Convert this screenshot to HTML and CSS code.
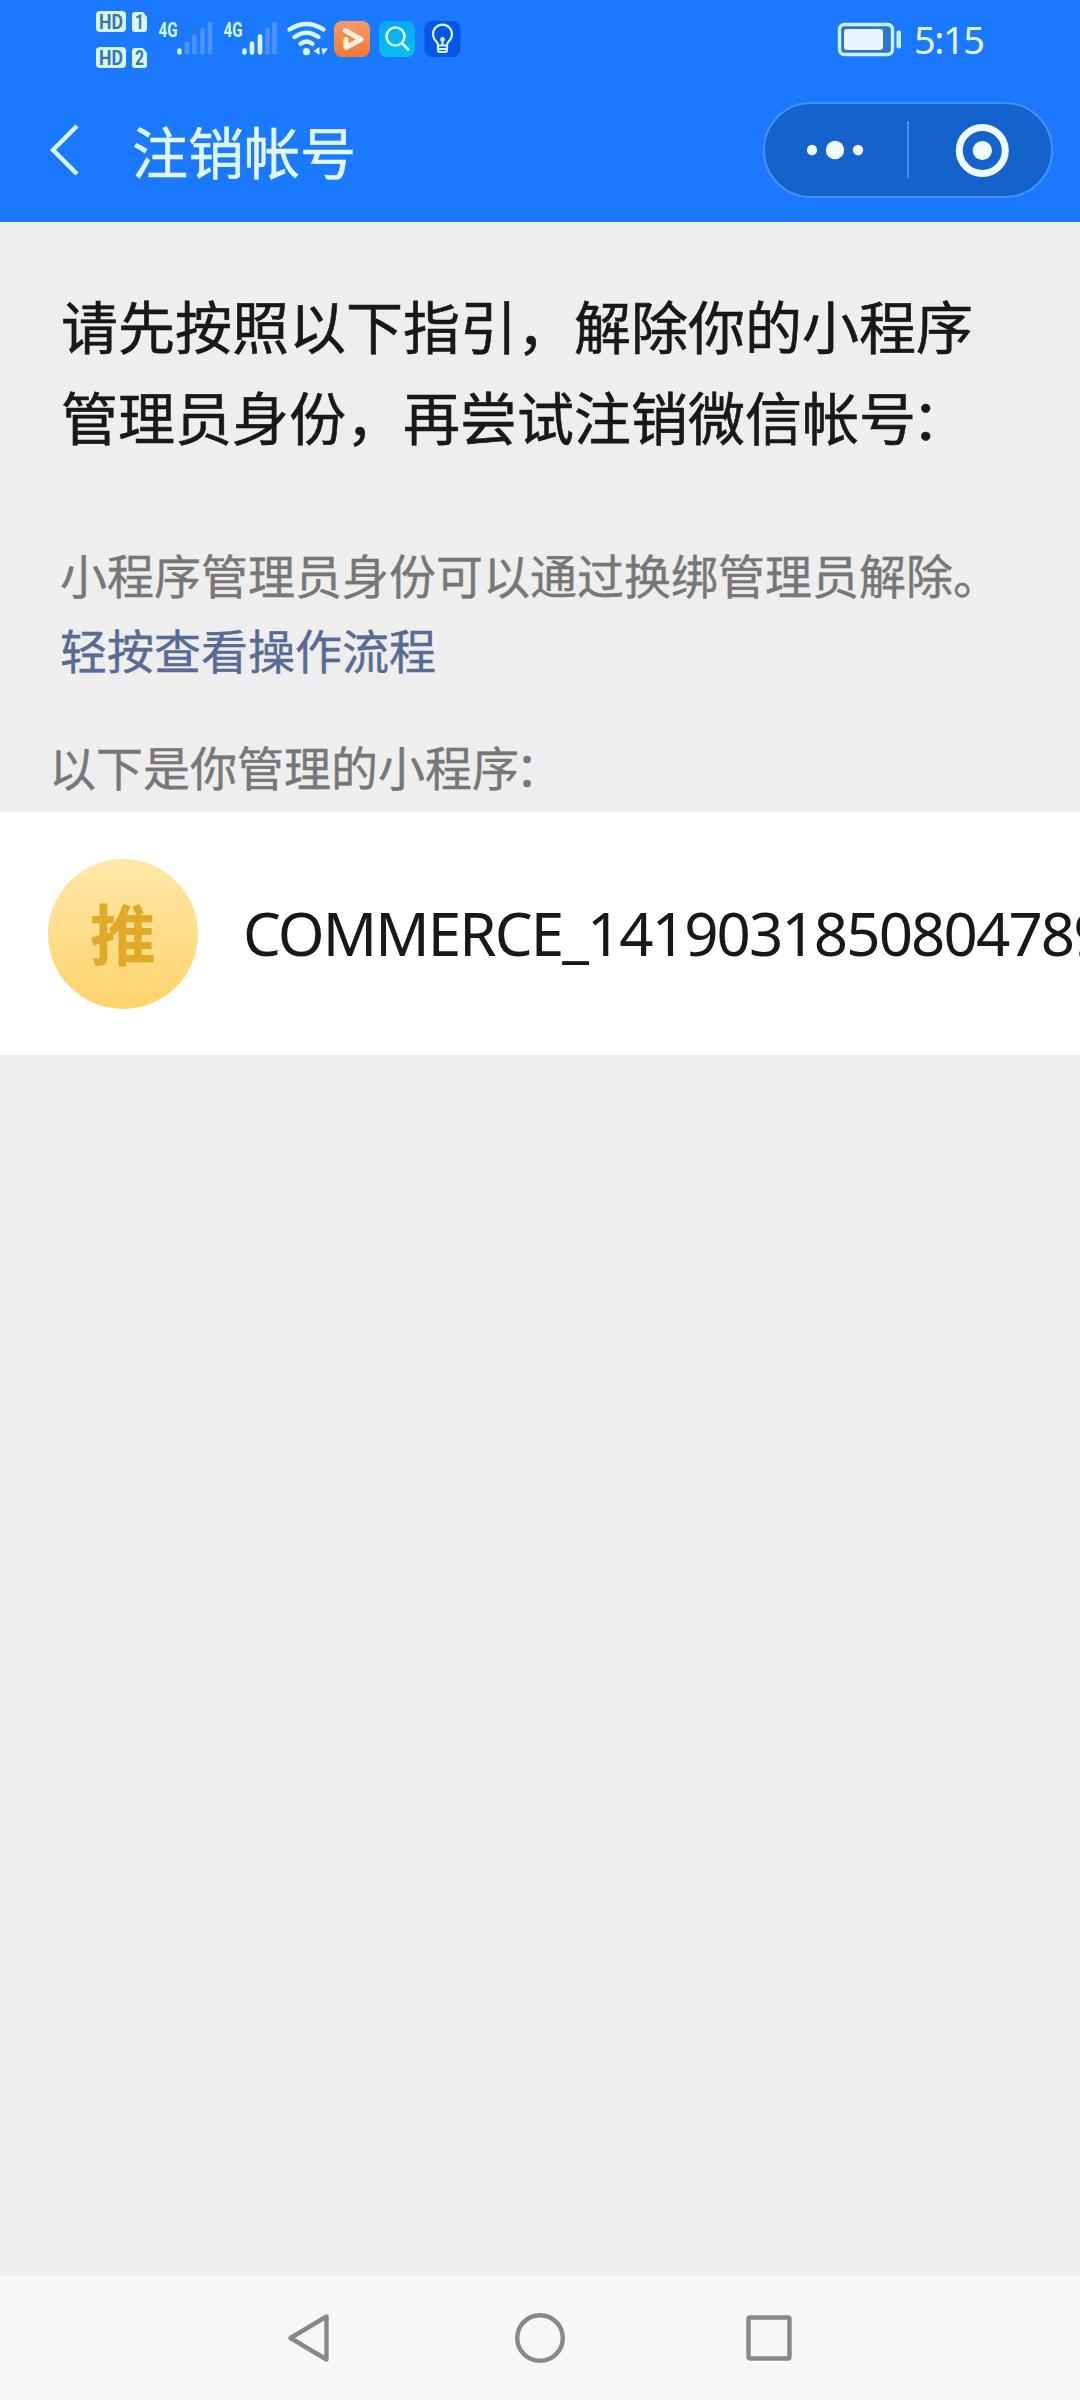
FILE: index.html
```html
<!DOCTYPE html>
<html lang="zh-CN">
<head>
<meta charset="utf-8">
<title>注销帐号</title>
<link rel="stylesheet" href="styles.css">
</head>
<body>
<div class="screen">
  <header class="header">
    <div class="status">
      <svg class="status-icons" width="380" height="80" viewBox="90 0 380 80">
        <defs>
          <linearGradient id="video" x1="0" y1="0" x2="0" y2="1"><stop offset="0" stop-color="#f29a66"/><stop offset="1" stop-color="#f47a35"/></linearGradient>
          <linearGradient id="search" x1="0" y1="0" x2="0" y2="1"><stop offset="0" stop-color="#08a9f0"/><stop offset="1" stop-color="#08bdf5"/></linearGradient>
        </defs>
        <g fill="#d9f5ff">
          <rect x="96" y="11" width="30" height="21" rx="4"/>
          <path d="M135 12h8l4 5v12q0 3-3 3h-9q-3 0-3-3V15q0-3 3-3z"/>
          <rect x="96" y="47" width="30" height="21" rx="4"/>
          <path d="M135 48h8l4 5v12q0 3-3 3h-9q-3 0-3-3V51q0-3 3-3z"/>
        </g>
        <g class="badge-text">
          <text x="99" y="29" textLength="24" lengthAdjust="spacingAndGlyphs">HD</text><text x="135" y="29" textLength="9" lengthAdjust="spacingAndGlyphs">1</text>
          <text x="99" y="65" textLength="24" lengthAdjust="spacingAndGlyphs">HD</text><text x="135" y="65" textLength="9" lengthAdjust="spacingAndGlyphs">2</text>
        </g>
        <g class="net-text">
          <text x="158.500" y="36.500" textLength="19" lengthAdjust="spacingAndGlyphs">4G</text>
          <text x="223.500" y="36.500" textLength="19" lengthAdjust="spacingAndGlyphs">4G</text>
        </g>
        <g stroke-width="4.600" stroke-linecap="round" stroke="#d9f5ff">
          <path d="M179.500 50.500v2M244.500 50.500v2M252 43.500v9M260 36.500v16"/>
          <path stroke="#4a93fd" d="M187 43.500v9M194.500 36.500v16M202.500 30v22.500M210 24v28.500M267.500 30v22.500M274.500 24v28.500"/>
        </g>
        <g fill="none" stroke="#d9f5ff" stroke-width="4.400" stroke-linecap="round">
          <path d="M289.500 29.500q17-11 34 0M294.500 37q12-8.500 24 0M300.500 43.800q6-4.500 12 0"/>
        </g>
        <circle cx="306.500" cy="51.700" r="3.600" fill="#d9f5ff"/>
        <path fill="#d9f5ff" d="M319.500 47v8l-6-4zM321.500 48.500h6.500l-5 6.500z"/>
        <rect x="334" y="21" width="36" height="36" rx="8" fill="url(#video)"/>
        <path d="M345.500 30.500L361 39.500 346 47.500v-8" fill="none" stroke="#fff0df" stroke-width="5" stroke-linejoin="round" stroke-linecap="round"/>
        <rect x="379" y="21" width="36" height="36" rx="8" fill="url(#search)"/>
        <path d="M402.500 43.500l5.500 6" stroke="#d9f5ff" stroke-width="2.800" stroke-linecap="round"/>
        <circle cx="395.500" cy="36.500" r="9" fill="none" stroke="#d9f5ff" stroke-width="2.600"/>
        <rect x="424.500" y="21" width="36" height="36" rx="8" fill="#0557e8"/>
        <path d="M438 45.500q0-2.500-2-4.500a9.500 9.500 0 1 1 13 0q-2 2-2 4.500zM438 46v4q0 2 2 2h5q2 0 2-2v-4M438 49h9M442.500 40v5" fill="none" stroke="#d9f5ff" stroke-width="2.200"/>
        <circle cx="442.500" cy="39.500" r="2.400" fill="#d9f5ff"/>
      </svg>
      <div class="status-right">
        <svg width="66" height="36" viewBox="836 21 66 36">
          <rect x="839.500" y="24.500" width="53" height="30" rx="5" fill="#2b75cf" stroke="#c9f1ff" stroke-width="3.400"/>
          <rect x="844" y="29" width="39" height="21" rx="3" fill="#e8f4ff"/>
          <rect x="896.500" y="30.500" width="4.500" height="18" rx="2" fill="#c9f1ff"/>
        </svg>
        <span class="clock">5:15</span>
      </div>
    </div>
    <div class="titlebar">
      <svg class="back" width="32" height="54" viewBox="0 0 32 54"><path d="M29 3L5 27l24 24" fill="none" stroke="#d9f5ff" stroke-width="4.400"/></svg>
      <h1 class="title">注销帐号</h1>
      <div class="capsule">
        <svg width="288" height="94" viewBox="764 103 288 94">
          <g fill="#f0fbff"><circle cx="812" cy="150" r="5.200"/><circle cx="835" cy="150" r="9.200"/><circle cx="858" cy="150" r="5.200"/><circle cx="982.300" cy="150.500" r="9.600"/></g>
          <path d="M908 121v57" stroke="#4590ee" stroke-width="2"/>
          <circle cx="982.300" cy="150.500" r="23" fill="none" stroke="#f0fbff" stroke-width="7"/>
        </svg>
      </div>
    </div>
  </header>
  <main class="content">
    <h2 class="guide">请先按照以下指引，解除你的小程序<br>管理员身份，再尝试注销微信帐<span class="tight">号</span>：</h2>
    <p class="note">小程序管理员身份可以通过换绑管理员解除。<br><a class="link">轻按查看操作流程</a></p>
    <p class="label">以下是你管理的小程<span class="tight">序</span>：</p>
    <div class="row">
      <div class="avatar">推</div>
      <span class="name">COMMERCE_1419031850804789</span>
    </div>
  </main>
  <nav class="navbar">
    <svg width="50" height="54" viewBox="0 0 50 54"><path d="M5.500 27L41.500 5.500v43z"/></svg>
    <svg width="54" height="54" viewBox="0 0 54 54"><circle cx="27" cy="27" r="22.800"/></svg>
    <svg width="50" height="54" viewBox="0 0 50 54"><rect x="3.500" y="6.500" width="41" height="41" rx="1.500"/></svg>
  </nav>
</div>
</body>
</html>
```
FILE: styles.css
```css
* { box-sizing: border-box; margin: 0; }
body {
  margin: 0;
  background: #eee;
  font-family: "Noto Sans CJK SC", sans-serif;
}
svg { display: block; flex: none; }
.screen {
  display: flex;
  flex-direction: column;
  width: 1080px;
  height: 2400px;
  overflow: hidden;
}
.header {
  height: 222px;
  background: #1a79ff;
  color: #e0f7ff;
}
.status {
  display: flex;
  justify-content: space-between;
  height: 80px;
  padding: 0 95px 0 90px;
}
.badge-text {
  font: 700 20px Roboto, sans-serif;
  fill: #3b76a8;
}
.net-text {
  font: 700 20px Roboto, sans-serif;
  fill: #d9f5ff;
}
.status-right {
  display: flex;
  align-items: center;
  height: 80px;
  gap: 12px;
}
.status-right svg { margin-top: -2px; }
.clock {
  width: 71px;
  padding-bottom: 2px;
  font: 400 38px/80px "Noto Sans", sans-serif;
  letter-spacing: -1.5px;
  white-space: nowrap;
}
.titlebar {
  display: flex;
  align-items: center;
  height: 142px;
  padding: 0 27px 2px 48px;
}
.title {
  margin: 0 0 1px 52px;
  font-size: 56px;
  font-weight: 400;
  line-height: 84px;
  -webkit-text-stroke: 0.6px currentColor;
}
.capsule {
  width: 290px;
  height: 96px;
  margin-left: auto;
  border: 2px solid #4590f0;
  border-radius: 48px;
  background: #1462cc;
}
.capsule svg { margin: -1px; }
.content {
  flex: 1;
  padding-top: 57px;
}
.guide {
  padding-left: 61px;
  color: #181818;
  font-size: 57px;
  font-weight: 400;
  line-height: 91px;
  white-space: nowrap;
  -webkit-text-stroke: 0.6px currentColor;
}
.tight { letter-spacing: -0.08em; }
.note {
  margin-top: 75px;
  padding-left: 60px;
  color: #777;
  font-size: 47px;
  line-height: 75px;
  white-space: nowrap;
  -webkit-text-stroke: 0.4px currentColor;
}
.link { color: #576b95; }
.label {
  margin-top: 42px;
  padding-left: 49px;
  color: #777;
  font-size: 47px;
  line-height: 75px;
  -webkit-text-stroke: 0.4px currentColor;
}
.row {
  display: flex;
  align-items: center;
  gap: 45px;
  height: 243px;
  margin-top: 9px;
  padding-left: 48px;
  overflow: hidden;
  background: #fff;
}
.avatar {
  flex: none;
  width: 150px;
  height: 150px;
  border-radius: 50%;
  background: linear-gradient(#ffe8a8, #ffd36c);
  color: #e0aa28;
  font-size: 66px;
  font-weight: 700;
  line-height: 145px;
  text-align: center;
}
.name {
  margin-bottom: 2px;
  color: #181818;
  font: 400 60px/90px "Noto Sans", sans-serif;
  letter-spacing: -1.9px;
  white-space: nowrap;
}
.navbar {
  display: flex;
  justify-content: center;
  align-items: center;
  gap: 178px;
  height: 124px;
  background: #f7f7f7;
}
.navbar svg {
  fill: none;
  stroke: #888;
  stroke-width: 4.4;
  stroke-linejoin: round;
}
```
